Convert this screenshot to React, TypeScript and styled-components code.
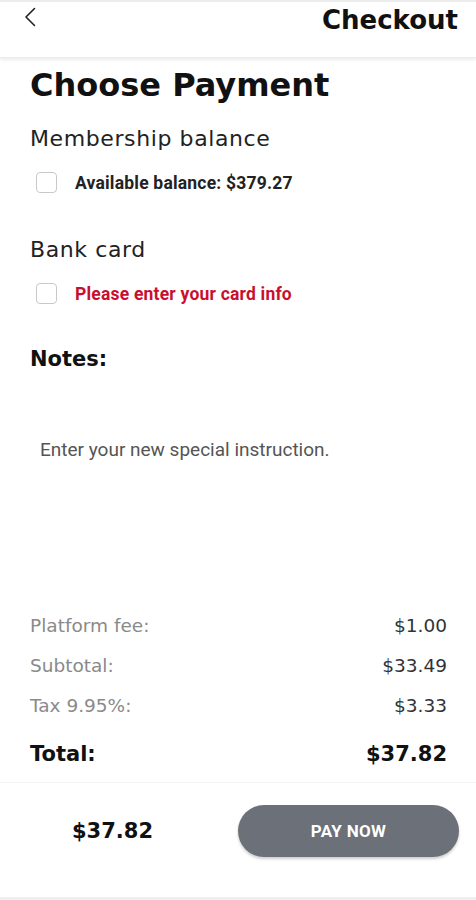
import React, { useState } from "react";
import styled, { createGlobalStyle } from "styled-components";

const GlobalStyle = createGlobalStyle`
  html, body {
    margin: 0;
    padding: 0;
    background: #ffffff;
  }
  * {
    box-sizing: border-box;
  }
`;

const HEAD_FONT = `"DejaVu Sans", "Open Sans", sans-serif`;
const BODY_FONT = `Roboto, "Noto Sans", sans-serif`;

type FeeRow = {
  label: string;
  value: string;
};

const FEES: FeeRow[] = [
  { label: "Platform fee:", value: "$1.00" },
  { label: "Subtotal:", value: "$33.49" },
  { label: "Tax 9.95%:", value: "$3.33" },
];

const App = () => {
  const [useBalance, setUseBalance] = useState<boolean>(false);
  const [useCard, setUseCard] = useState<boolean>(false);
  const [notes, setNotes] = useState<string>("");

  return (
    <>
      <GlobalStyle />
      <Page>
        <Header>
          <BackButton aria-label="Back">
            <svg width="12" height="20" viewBox="0 0 12 20" fill="none">
              <path
                d="M10.5 1.5L2 10L10.5 18.5"
                stroke="#222"
                strokeWidth="1.6"
                strokeLinecap="round"
                strokeLinejoin="round"
              />
            </svg>
          </BackButton>
          <HeaderTitle>Checkout</HeaderTitle>
        </Header>

        <Content>
          <Title>Choose Payment</Title>

          <Section>
            <SectionTitle>Membership balance</SectionTitle>
            <Option onClick={() => setUseBalance(!useBalance)}>
              <Box checked={useBalance} />
              <OptionText>Available balance: $379.27</OptionText>
            </Option>
          </Section>

          <Section>
            <SectionTitle>Bank card</SectionTitle>
            <Option onClick={() => setUseCard(!useCard)}>
              <Box checked={useCard} />
              <OptionText warn>Please enter your card info</OptionText>
            </Option>
          </Section>

          <NotesTitle>Notes:</NotesTitle>
          <NotesInput
            value={notes}
            onChange={(e) => setNotes(e.target.value)}
            placeholder="Enter your new special instruction."
          />

          <Fees>
            {FEES.map((fee) => (
              <FeeLine key={fee.label}>
                <FeeLabel>{fee.label}</FeeLabel>
                <FeeValue>{fee.value}</FeeValue>
              </FeeLine>
            ))}
            <TotalLine>
              <span>Total:</span>
              <span>$37.82</span>
            </TotalLine>
          </Fees>
        </Content>

        <Footer>
          <FooterTotal>$37.82</FooterTotal>
          <PayButton>PAY NOW</PayButton>
        </Footer>
      </Page>
    </>
  );
};

const Page = styled.div`
  width: 476px;
  height: 900px;
  display: flex;
  flex-direction: column;
  background: #fff;
  border-top: 2px solid #ececec;
  border-bottom: 3px solid #efefef;
  overflow: hidden;
`;

const Header = styled.header`
  height: 56px;
  display: flex;
  justify-content: space-between;
  align-items: flex-start;
  padding: 5px 18px 0 24px;
  box-shadow: 0 2px 3px rgba(0, 0, 0, 0.08);
  border-bottom: 1px solid #ececec;
`;

const BackButton = styled.button`
  border: none;
  background: transparent;
  padding: 0;
  cursor: pointer;
  display: flex;
`;

const HeaderTitle = styled.h1`
  margin: 0;
  font-family: ${HEAD_FONT};
  font-size: 26px;
  font-weight: 700;
  color: #111;
  line-height: 27px;
`;

const Content = styled.main`
  flex: 1;
  display: flex;
  flex-direction: column;
  padding: 0 29px 0 30px;
`;

const Title = styled.h2`
  margin: 8px 0 0;
  font-family: ${HEAD_FONT};
  font-size: 32px;
  font-weight: 700;
  color: #111;
  line-height: 38px;
`;

const Section = styled.section`
  display: flex;
  flex-direction: column;
  & + & {
    margin-top: 22px;
  }
`;

const SectionTitle = styled.h3`
  margin: 20px 0 0;
  font-family: ${HEAD_FONT};
  font-size: 22px;
  font-weight: 400;
  letter-spacing: 0.6px;
  color: #222;
  line-height: 30px;
`;

const Option = styled.label`
  display: flex;
  align-items: center;
  gap: 18px;
  padding-left: 6px;
  margin-top: 18px;
  cursor: pointer;
`;

const Box = styled.span<{ checked: boolean }>`
  width: 21px;
  height: 21px;
  flex-shrink: 0;
  border: 1.5px solid #c9c9c9;
  border-radius: 4px;
  background: ${(p) => (p.checked ? "#6b7079" : "#fff")};
`;

const OptionText = styled.span<{ warn?: boolean }>`
  font-family: ${BODY_FONT};
  font-size: 17.5px;
  font-weight: 700;
  letter-spacing: 0.2px;
  color: ${(p) => (p.warn ? "#c8102e" : "#222")};
`;

const NotesTitle = styled.h3`
  margin: 40px 0 0;
  font-family: ${HEAD_FONT};
  font-size: 21px;
  font-weight: 700;
  color: #111;
  line-height: 30px;
`;

const NotesInput = styled.textarea`
  margin: 64px 0 0 10px;
  height: 157px;
  border: none;
  resize: none;
  outline: none;
  padding: 0;
  font-family: ${BODY_FONT};
  font-size: 19px;
  color: #333;
  &::placeholder {
    color: #555;
  }
`;

const Fees = styled.div`
  display: flex;
  flex-direction: column;
  gap: 18px;
  margin-top: 20px;
`;

const FeeLine = styled.div`
  display: flex;
  justify-content: space-between;
  font-family: ${HEAD_FONT};
  font-size: 18.5px;
  line-height: 22px;
`;

const FeeLabel = styled.span`
  color: #8a8a8a;
`;

const FeeValue = styled.span`
  color: #333;
`;

const TotalLine = styled.div`
  display: flex;
  justify-content: space-between;
  margin-top: 4px;
  font-family: ${HEAD_FONT};
  font-size: 21px;
  font-weight: 700;
  color: #111;
  line-height: 30px;
`;

const Footer = styled.footer`
  height: 115px;
  display: flex;
  align-items: center;
  justify-content: space-between;
  padding: 0 17px 18px 72px;
  border-top: 1px solid #f4f4f4;
`;

const FooterTotal = styled.span`
  font-family: ${HEAD_FONT};
  font-size: 21px;
  font-weight: 700;
  color: #111;
`;

const PayButton = styled.button`
  width: 221px;
  height: 52px;
  border: none;
  border-radius: 26px;
  background: #6b7079;
  box-shadow: 0 2px 3px rgba(0, 0, 0, 0.2);
  color: #fff;
  font-family: ${BODY_FONT};
  font-size: 17px;
  font-weight: 700;
  letter-spacing: 0.3px;
  cursor: pointer;
`;

export default App;
